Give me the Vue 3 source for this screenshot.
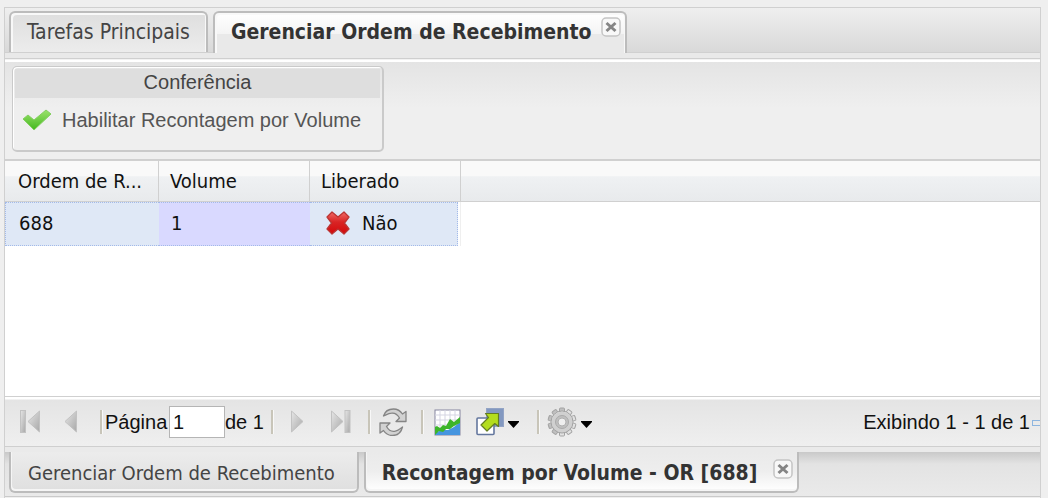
<script setup>
import { ref } from 'vue'

const page = ref('1')
const columns = ['Ordem de R...', 'Volume', 'Liberado']
const rows = [{ order: '688', volume: '1', released: 'Não' }]
</script>

<template>
  <div class="page">
    <main class="panel">
      <nav class="tabs tabs-top">
        <div class="tab"><button type="button" class="tab-label">Tarefas Principais</button></div>
        <div class="tab active">
          <button type="button" class="tab-label">Gerenciar Ordem de Recebimento</button>
          <button type="button" class="close" aria-label="Fechar">
            <svg viewBox="0 0 20 20"><rect x="1" y="1" width="18" height="18" rx="4" fill="#f8f8f8" stroke="#c4c4c4" stroke-width="1.5" /><path d="M5.500 6l9 8M14.500 6l-9 8" stroke="#858585" stroke-width="3" /></svg>
          </button>
        </div>
      </nav>
      <div class="tab-base"></div>

      <div class="toolbar">
        <section class="group">
          <h2>Conferência</h2>
          <button type="button" class="action">
            <svg class="check" viewBox="0 0 30 22">
              <defs><linearGradient id="green" x1="0" y1="0" x2="0" y2="1"><stop offset="0" stop-color="#9be26c" /><stop offset="1" stop-color="#43b81d" /></linearGradient></defs>
              <path d="M1 10L6 6L12 11L24 1L29 5L12 21Z" fill="url(#green)" stroke="#83cf60" />
            </svg>
            <span>Habilitar Recontagem por Volume</span>
          </button>
        </section>
      </div>

      <div class="grid">
        <table>
          <colgroup><col class="c1" /><col class="c2" /><col class="c3" /><col /></colgroup>
          <thead>
            <tr><th v-for="name in columns" :key="name" scope="col">{{ name }}</th><td></td></tr>
          </thead>
          <tbody>
            <tr v-for="row in rows" :key="row.order">
              <td class="cell">{{ row.order }}</td>
              <td class="cell selected">{{ row.volume }}</td>
              <td class="last">
                <div class="cell status">
                  <svg viewBox="0 0 24 24">
                    <defs><linearGradient id="red" x1="0" y1="0" x2="0" y2="1"><stop offset="0" stop-color="#f06a67" /><stop offset=".45" stop-color="#d92525" /><stop offset="1" stop-color="#d3090b" /></linearGradient></defs>
                    <path d="M6 1L12 6L18 1L23 6L18.500 12L23 18L18 23L12 18L6 23L1 18L5.500 12L1 6Z" fill="url(#red)" stroke="#bb3433" stroke-width="1.3" stroke-linejoin="round" />
                  </svg>
                  <span>{{ row.released }}</span>
                </div>
              </td>
              <td></td>
            </tr>
          </tbody>
        </table>
      </div>

      <footer class="pager">
        <svg class="defs" aria-hidden="true">
          <defs>
            <linearGradient id="grey" x1="0" y1="0" x2="1" y2="1"><stop offset="0" stop-color="#e6e6e6" /><stop offset="1" stop-color="#a8a8a8" /></linearGradient>
            <linearGradient id="metal" x1="0" y1="0" x2="0" y2="1"><stop offset="0" stop-color="#e4e4e4" /><stop offset="1" stop-color="#bdbdbd" /></linearGradient>
          </defs>
        </svg>
        <button type="button" class="first" aria-label="Primeira página" disabled>
          <svg viewBox="0 0 21 24"><g fill="url(#grey)" stroke="#c2c2c2"><rect x=".5" y=".5" width="5" height="22" /><path d="M19.500 1v21L8 11.500Z" /></g></svg>
        </button>
        <button type="button" class="prev" aria-label="Página anterior" disabled>
          <svg viewBox="0 0 13 24"><path d="M12.500 1v21L1 11.500Z" fill="url(#grey)" stroke="#c2c2c2" /></svg>
        </button>
        <i class="sep s1"></i>
        <label for="page">Página</label>
        <input id="page" v-model="page" type="text" />
        <span>de 1</span>
        <i class="sep s2"></i>
        <button type="button" class="next" aria-label="Próxima página" disabled>
          <svg viewBox="0 0 13 24"><path d="M.5 1v21L12 11.500Z" fill="url(#grey)" stroke="#c2c2c2" /></svg>
        </button>
        <button type="button" class="end" aria-label="Última página" disabled>
          <svg viewBox="0 0 21 24"><g fill="url(#grey)" stroke="#c2c2c2"><path d="M1.500 1v21L13 11.500Z" /><rect x="15" y=".5" width="5" height="22" /></g></svg>
        </button>
        <i class="sep s3"></i>
        <button type="button" class="refresh" aria-label="Atualizar">
          <svg viewBox="0 0 28 28">
            <g stroke="#858585" stroke-width="1.300" fill="#d2d2d2" stroke-linejoin="round">
              <path d="M4.500 8C6 3 10 1 14.500 1C18.500 1 21.500 3 23.500 6L27 3.500V13.500H17L20.500 10C18.500 6.500 15.500 4.800 12.500 5.200C9.500 5.500 7 7 4.500 8Z" />
              <path d="M23.500 19C22 25 18 27.500 13.500 27.500C9.500 27.500 6.500 25.500 4.500 22.500L1 25V15H11L7.500 18.500C9.500 22 12.500 23.700 15.500 23.300C18.500 23 21 21 23.500 19Z" />
            </g>
          </svg>
        </button>
        <i class="sep s4"></i>
        <button type="button" class="chart" aria-label="Gráfico">
          <svg viewBox="0 0 27 27">
            <rect x="1" y="1" width="25" height="25" fill="#fff" stroke="#85859f" />
            <path d="M6 1v24M11 1v24M16 1v24M21 1v24M1 6h25M1 11h25M1 16h25" stroke="#d5d5e2" />
            <path d="M1 26V24L7 21L14 21L20 18L26 13V26Z" fill="#4595df" />
            <path d="M1 18L3 17L6 19L9 16L12 17L16 10L20 13L26 8V14L20 17L16 20L12 20L9 23L5 22L1 26Z" fill="#3db52a" />
          </svg>
        </button>
        <button type="button" class="export" aria-label="Exportar">
          <svg class="sheets" viewBox="0 0 28 28">
            <rect x="10.500" y=".5" width="17" height="18" fill="#8298c0" stroke="#93a4c5" />
            <rect x="1" y="10" width="17" height="16.500" rx="1" fill="#fff" stroke="#64779e" stroke-width="1.6" />
            <path d="M9.500 5.500H22.500V18.500L18.800 15.500L11 23L5 17L12.500 9.500Z" fill="#b3dd1c" stroke="#637d20" stroke-width="1.200" stroke-linejoin="round" />
          </svg>
          <svg class="caret" viewBox="0 0 11 7"><path d="M0 0h11v1L5.500 7L0 1Z" fill="#000" /></svg>
        </button>
        <i class="sep s5"></i>
        <button type="button" class="gear" aria-label="Configurações">
          <svg class="cog" viewBox="0 0 30 30">
            <g fill="url(#metal)" stroke="#a3a3a3">
              <rect v-for="n in 5" :key="n" x="12.500" y="1" width="5" height="28" rx="1" :transform="`rotate(${n * 36} 15 15)`" />
              <circle cx="15" cy="15" r="11" />
            </g>
            <circle cx="15" cy="15" r="10.300" fill="#d0d0d0" />
            <circle cx="15" cy="15" r="6.500" fill="#c0c0c0" stroke="#aaa" />
            <circle cx="15" cy="15" r="4" fill="#efefef" stroke="#b0b0b0" />
          </svg>
          <svg class="caret" viewBox="0 0 11 7"><path d="M0 0h11v1L5.500 7L0 1Z" fill="#000" /></svg>
        </button>
        <span class="summary">Exibindo 1 - 1 de 1</span>
        <i class="mark"></i>
      </footer>

      <div class="lower-base"></div>
      <nav class="tabs tabs-bottom">
        <div class="tab"><button type="button" class="tab-label">Gerenciar Ordem de Recebimento</button></div>
        <div class="tab active">
          <button type="button" class="tab-label">Recontagem por Volume - OR [688]</button>
          <button type="button" class="close" aria-label="Fechar">
            <svg viewBox="0 0 20 20"><rect x="1" y="1" width="18" height="18" rx="4" fill="#f8f8f8" stroke="#c4c4c4" stroke-width="1.5" /><path d="M5.500 6l9 8M14.500 6l-9 8" stroke="#858585" stroke-width="3" /></svg>
          </button>
        </div>
      </nav>
    </main>
  </div>
</template>

<style>
body { background: #efefef; }
</style>

<style scoped>
* { box-sizing: border-box; }
.page {
  display: flex;
  min-height: 100vh;
  padding: 7px 7px 0 4px;
  font-family: "DejaVu Sans Condensed", "DejaVu Sans", sans-serif;
  font-stretch: condensed;
  font-size: 20px;
  line-height: 24px;
  color: #111;
}
button { margin: 0; padding: 0; border: 0; background: none; font: inherit; color: inherit; }
svg { display: block; width: 100%; height: 100%; }
.panel { flex: 1; min-width: 0; display: flex; flex-direction: column; border: 1px solid #d0d0d0; border-bottom: 0; }

.tabs { display: flex; gap: 5px; padding: 0 4px; }
.tab { display: flex; color: #444; }
.tab-label { white-space: nowrap; }
.active { color: #333; font-size: 21px; font-weight: bold; }
.close { width: 20px; height: 20px; flex: none; }
.tabs-top { height: 45px; padding-top: 3px; border-bottom: 1px solid #d0d0d0; background: linear-gradient(#efefef, #d9d9d9); font-size: 21px; }
.tabs-top .tab { height: 41px; padding: 0 16px 2px; border: 2px solid #bcbcbc; border-bottom: 0; border-radius: 6px 6px 0 0; background: linear-gradient(#dedede, #ececec); box-shadow: inset 2px 2px #f8f8f8, inset -1px 0 #f8f8f8; }
.tabs-top .active { height: 43px; padding: 0 4px 4px 16px; background: linear-gradient(#fff, #f4f4f4 50%, #e9e9e9 51%); }
.tabs-top .close { margin: 4px 0 0 10px; }
.tab-base { height: 9px; border-bottom: 2px solid #fff; background: linear-gradient(#e9e9e9 5px, #cfcfcf 5px, #cfcfcf 6px, #f2f2f2 6px); }

.toolbar { padding: 4px 7px 7px; background: linear-gradient(#e4e4e4, #efefef 46px); font-family: "Liberation Sans", Arial, sans-serif; }
.group { width: 372px; height: 86px; padding: 2px; border: 1px solid #cacaca; border-width: 1px 2px 2px 1px; border-radius: 5px; box-shadow: inset 1px 1px #fff; }
.group h2 { margin: 0; height: 29px; background: #dedede; color: #444; font: inherit; line-height: 26px; text-align: center; }
.action { display: flex; align-items: center; gap: 10px; margin: 10px 0 0 7px; color: #555; white-space: nowrap; }
.check { width: 30px; height: 22px; }

.grid { flex: 1; background: #fff; }
table { width: 100%; table-layout: fixed; border-collapse: separate; border-spacing: 0; }
.c1 { width: 154px; }
.c2 { width: 151px; }
.c3 { width: 151px; }
thead th, thead td { height: 43px; padding: 0 11px; border: 0 solid #d0d0d0; border-width: 2px 0 1px; background: linear-gradient(#f9f9f9, #f9f9f9 38%, #eff1f3 39%, #e8eaec); }
thead th { border-right-width: 1px; font-weight: normal; text-align: left; white-space: nowrap; }
thead th:first-child, tbody td:first-child { padding-left: 13px; }
tbody td { height: 44px; padding: 0 0 2px; }
.cell { border: 0 dotted #a3bae9; border-width: 1px 0; background: #dfe8f6; }
.cell:first-child { border-left-width: 1px; }
tbody .selected { padding-left: 12px; background: #d9d9ff; }
tbody .last { padding: 0; border-right: 1px solid #efefef; }
.status { display: flex; align-items: center; gap: 12px; height: 44px; width: 148px; padding: 0 0 2px 16px; }
.last .status { border-left: 0; border-right-width: 1px; }
.status svg { width: 24px; height: 24px; }

.pager { display: flex; align-items: center; height: 50px; padding: 1px 0 0 15px; border-top: 1px solid #d0d0d0; background: linear-gradient(#fff 2px, #e4e4e4 3px, #efefef); font-family: "Liberation Sans", Arial, sans-serif; white-space: nowrap; }
.defs { position: absolute; width: 0; height: 0; }
.pager button { flex: none; display: flex; align-items: center; height: 28px; }
.pager button svg { height: 24px; }
.first, .end { width: 21px; }
.prev, .next { width: 13px; }
.prev { margin-left: 23px; }
.sep { flex: none; width: 2px; height: 24px; background: #c8c5b9; border-right: 1px solid #f8f8f8; box-sizing: content-box; }
.s1 { margin: 0 2px 0 23px; }
.pager label { width: 64px; }
.pager input { width: 56px; height: 32px; padding: 0 0 0 3px; border: 1px solid #b5b5b5; border-radius: 0; background: #fff; font: inherit; color: #111; outline: 0; }
.s2 { margin: 0 17px 0 7px; }
.end { margin-left: 26px; }
.s3 { margin: 0 8px 0 17px; }
.refresh { width: 28px; }
.pager .refresh svg, .pager .sheets { height: 28px; }
.s4 { margin: 0 10px 0 14px; }
.chart { width: 27px; }
.pager .chart svg { height: 27px; }
.export { gap: 4px; margin-left: 15px; }
.sheets { width: 28px; }
.pager .caret { width: 11px; height: 7px; margin-top: 5px; }
.s5 { margin: 0 7px 0 18px; }
.gear { gap: 4px; }
.pager .cog { width: 30px; height: 30px; }
.summary { margin-left: auto; }
.mark { width: 8px; height: 6px; margin: 2px 0 0 2px; border: 1px solid #8db5df; border-right: 0; }

.lower-base { height: 6px; border-top: 1px solid #cfcfcf; background: #eaeaea; }
.tabs-bottom { height: 45px; margin-bottom: 1px; border-bottom: 1px solid #cacaca; background: linear-gradient(#c9c9c9, #e3e3e3 12px, #eaeaea); }
.tabs-bottom .tab { height: 41px; padding: 3px 22px 0 17px; border: 2px solid #bcbcbc; border-top: 0; border-radius: 0 0 6px 6px; background: linear-gradient(#ececec, #dfdfdf); box-shadow: inset 1px -2px #f5f5f5; }
.tabs-bottom .active { padding: 3px 4px 0 16px; background: linear-gradient(#eaeaea, #eee 50%, #fff); }
.tabs-bottom .close { margin: 4px 0 0 16px; }
</style>
